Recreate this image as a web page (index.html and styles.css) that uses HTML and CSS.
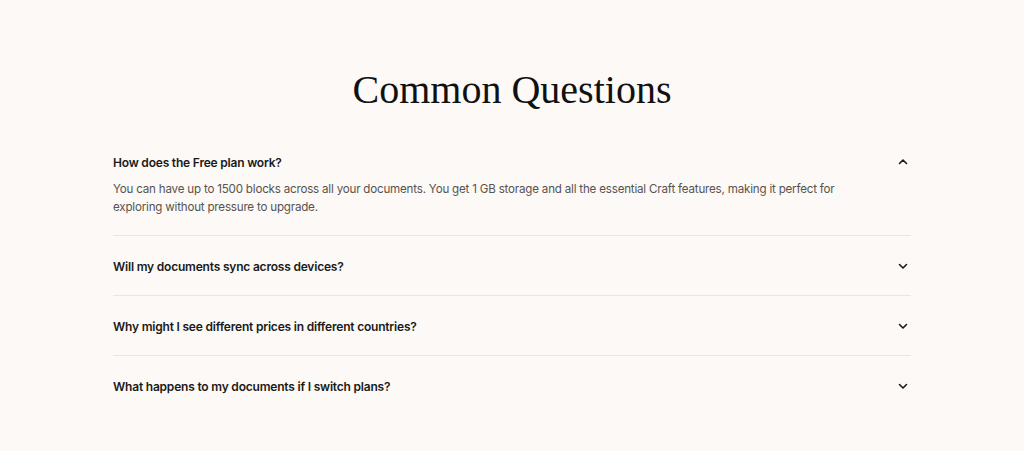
FILE: index.html
```html
<!DOCTYPE html>
<html lang="en">
<head>
<meta charset="utf-8">
<title>Common Questions</title>
<link rel="stylesheet" href="styles.css">
</head>
<body>
<section class="faq">
  <h2 class="faq-title">Common Questions</h2>
  <div class="faq-list">
    <div class="faq-item open">
      <div class="faq-q">
        <span>How does the Free plan work?</span>
        <svg class="chev" width="12" height="12" viewBox="0 0 12 12"><path d="M2.5 7.5 L6 4 L9.5 7.5" fill="none" stroke="#1a1a1a" stroke-width="1.6" stroke-linecap="round" stroke-linejoin="round"/></svg>
      </div>
      <p class="faq-a">You can have up to 1500 blocks across all your documents. You get 1 GB storage and all the essential Craft features, making it perfect for exploring without pressure to upgrade.</p>
    </div>
    <div class="faq-item">
      <div class="faq-q">
        <span>Will my documents sync across devices?</span>
        <svg class="chev" width="12" height="12" viewBox="0 0 12 12"><path d="M2.5 4.5 L6 8 L9.5 4.5" fill="none" stroke="#1a1a1a" stroke-width="1.6" stroke-linecap="round" stroke-linejoin="round"/></svg>
      </div>
    </div>
    <div class="faq-item">
      <div class="faq-q">
        <span>Why might I see different prices in different countries?</span>
        <svg class="chev" width="12" height="12" viewBox="0 0 12 12"><path d="M2.5 4.5 L6 8 L9.5 4.5" fill="none" stroke="#1a1a1a" stroke-width="1.6" stroke-linecap="round" stroke-linejoin="round"/></svg>
      </div>
    </div>
    <div class="faq-item last">
      <div class="faq-q">
        <span>What happens to my documents if I switch plans?</span>
        <svg class="chev" width="12" height="12" viewBox="0 0 12 12"><path d="M2.5 4.5 L6 8 L9.5 4.5" fill="none" stroke="#1a1a1a" stroke-width="1.6" stroke-linecap="round" stroke-linejoin="round"/></svg>
      </div>
    </div>
  </div>
</section>
</body>
</html>
```
FILE: styles.css
```css
html, body {
  margin: 0;
  padding: 0;
  background: #fcf9f6;
}
body {
  font-family: Inter, "Noto Sans", sans-serif;
  color: #1a1a1a;
}
.faq {
  width: 798px;
  margin: 0 auto;
  padding-top: 66px;
}
.faq-title {
  margin: 0 0 18px;
  font-family: "Liberation Serif", "DejaVu Serif", serif;
  font-weight: 400;
  font-size: 40px;
  line-height: 48px;
  text-align: center;
  color: #111;
}
.faq-list {
  display: flex;
  flex-direction: column;
}
.faq-item {
  padding: 20px 0 19px;
  border-bottom: 1px solid #e9e5e1;
}
.faq-item.last {
  border-bottom: none;
}
.faq-q {
  display: flex;
  justify-content: space-between;
  align-items: center;
  height: 20px;
  font-size: 12px;
  font-weight: 600;
  letter-spacing: -0.2px;
}
.chev {
  margin-right: 2px;
}
.faq-a {
  margin: 8px 0 0;
  font-size: 11.6px;
  line-height: 18px;
  letter-spacing: -0.2px;
  color: #57534f;
  max-width: 740px;
}
```
